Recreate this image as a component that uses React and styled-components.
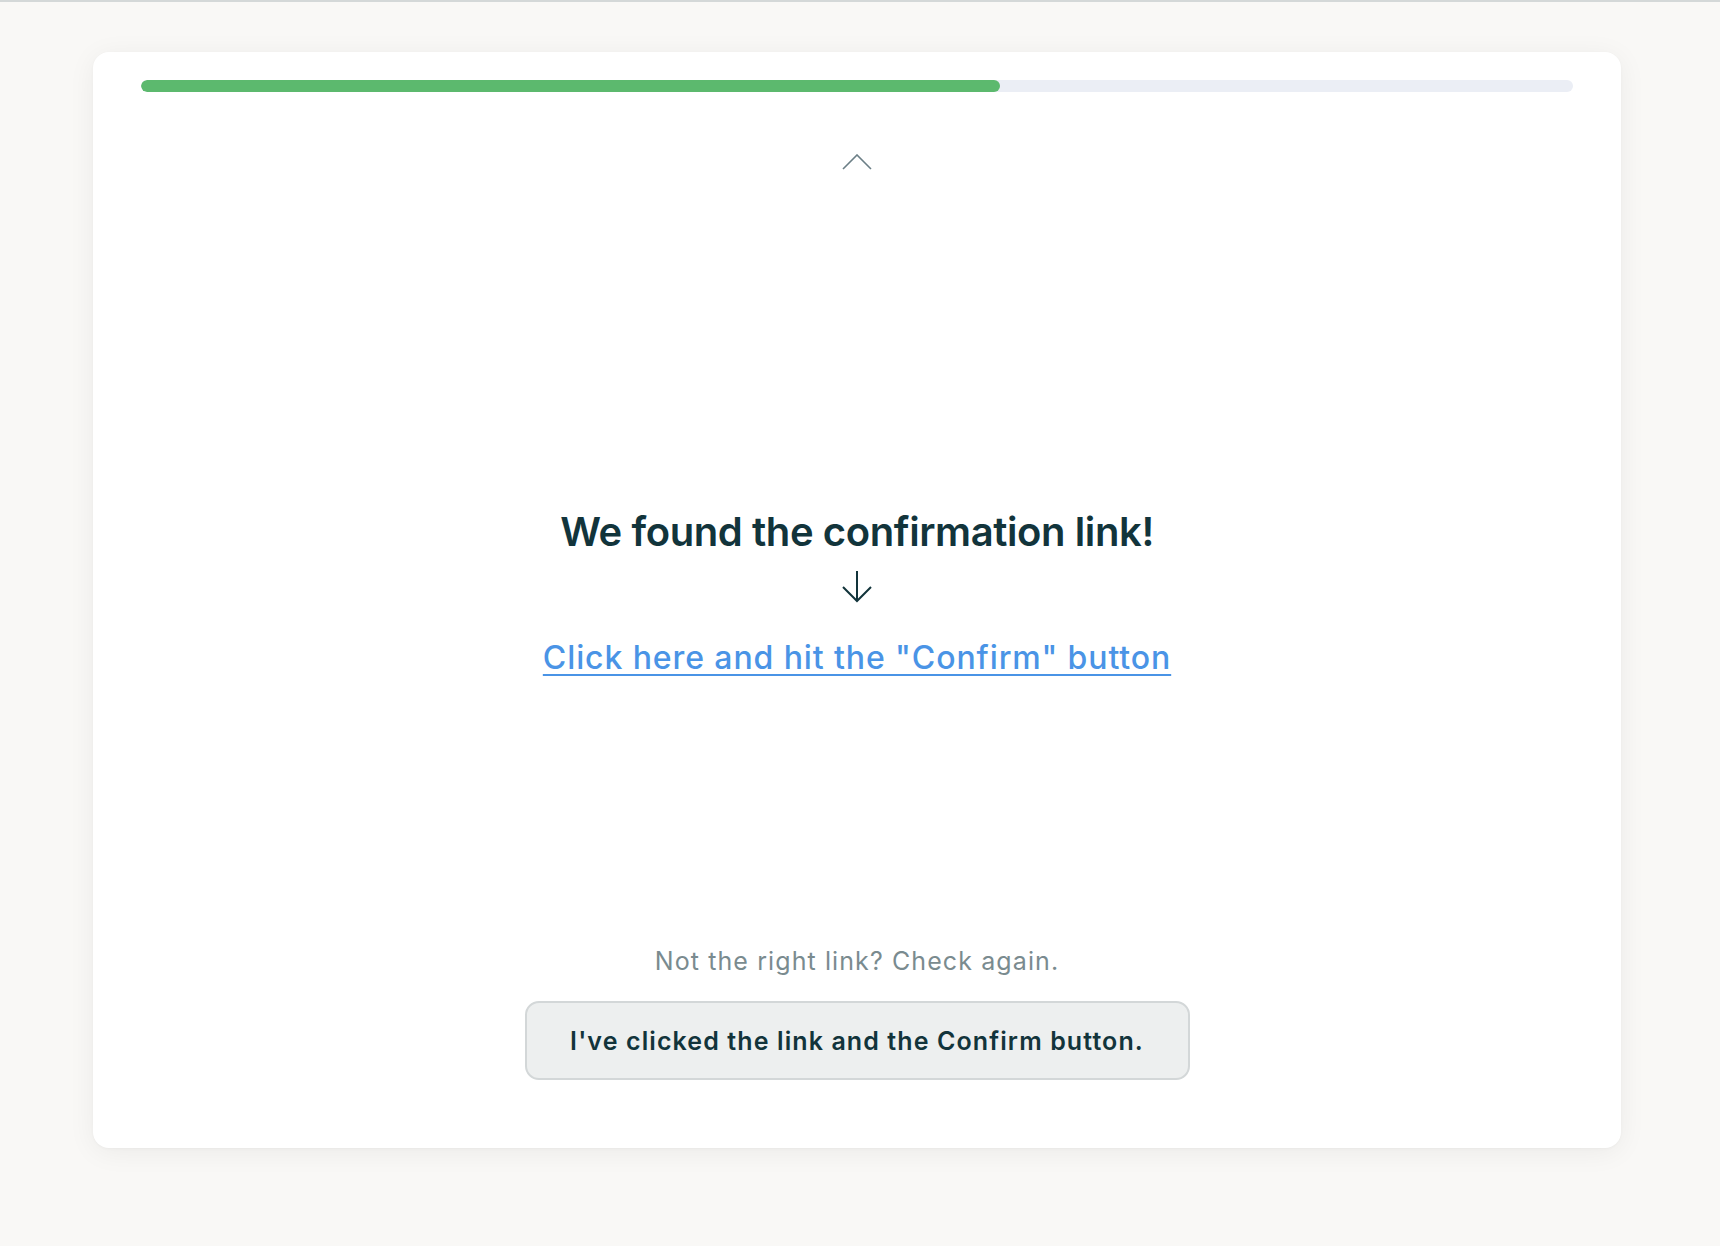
import React from 'react';
import styled, { createGlobalStyle } from 'styled-components';

const GlobalStyle = createGlobalStyle`
    html, body {
        margin: 0;
        padding: 0;
        background: #f9f8f6;
    }
    body {
        font-family: Inter, "Noto Sans", sans-serif;
        color: #12343b;
        border-top: 2px solid #d4d8d8;
    }
`

function App() {
    const progress = 60;

    return (
        <>
            <GlobalStyle />
            <Page>
                <Card>
                    <Track>
                        <Fill style={{ width: `${progress}%` }} />
                    </Track>
                    <BackButton aria-label="Previous">
                        <svg width="30" height="16" viewBox="0 0 30 16" fill="none">
                            <path d="M1 15 L15 1 L29 15" stroke="#6b7f86" strokeWidth="1.6" />
                        </svg>
                    </BackButton>
                    <Content>
                        <Heading>We found the confirmation link!</Heading>
                        <ArrowDown width="30" height="32" viewBox="0 0 30 32" fill="none">
                            <path d="M15 0 V30 M1 16 L15 30 L29 16" stroke="#12343b" strokeWidth="2" />
                        </ArrowDown>
                        <ConfirmLink href="#">Click here and hit the "Confirm" button</ConfirmLink>
                    </Content>
                    <Footer>
                        <Note>Not the right link? Check again.</Note>
                        <DoneButton>I've clicked the link and the Confirm button.</DoneButton>
                    </Footer>
                </Card>
            </Page>
        </>
    )
}

export default App;



const Page = styled.div`
    padding: 50px 0 96px 93px;
`

const Card = styled.div`
    width: 1528px;
    height: 1096px;
    box-sizing: border-box;
    padding: 28px 48px 68px;
    background: #ffffff;
    border-radius: 16px;
    box-shadow: 0 4px 28px rgba(0, 0, 0, 0.06), 0 1px 3px rgba(0, 0, 0, 0.03);
    display: flex;
    flex-direction: column;
    align-items: center;
`

const Track = styled.div`
    width: 100%;
    height: 12px;
    border-radius: 6px;
    background: #ebeef5;
    overflow: hidden;
`

const Fill = styled.div`
    height: 100%;
    border-radius: 6px;
    background: #5cb96e;
`

const BackButton = styled.button`
    margin-top: 62px;
    padding: 0;
    border: none;
    background: none;
    cursor: pointer;
    display: flex;
    line-height: 0;
`

const Content = styled.div`
    flex: 1;
    display: flex;
    flex-direction: column;
    align-items: center;
    padding-top: 338px;
`

const Heading = styled.h1`
    margin: 0;
    font-size: 40px;
    line-height: 48px;
    font-weight: 600;
    letter-spacing: -0.4px;
    color: #12343b;
`

const ArrowDown = styled.svg`
    margin-top: 15px;
    display: block;
`

const ConfirmLink = styled.a`
    margin-top: 35px;
    font-size: 32px;
    line-height: 40px;
    font-weight: 500;
    letter-spacing: 0.9px;
    color: #4a94e6;
    text-decoration: underline;
    text-decoration-thickness: 2px;
    text-underline-offset: 5px;
`

const Footer = styled.div`
    display: flex;
    flex-direction: column;
    align-items: center;
    gap: 24px;
`

const Note = styled.p`
    margin: 0;
    font-size: 25px;
    line-height: 32px;
    letter-spacing: 1.1px;
    color: #7a8b8f;
`

const DoneButton = styled.button`
    width: 665px;
    height: 79px;
    border: 2px solid #d3d7d8;
    border-radius: 14px;
    background: #edefef;
    font-family: Inter, "Noto Sans", sans-serif;
    font-size: 25px;
    font-weight: 600;
    letter-spacing: 1.1px;
    color: #12343b;
    cursor: pointer;
`
